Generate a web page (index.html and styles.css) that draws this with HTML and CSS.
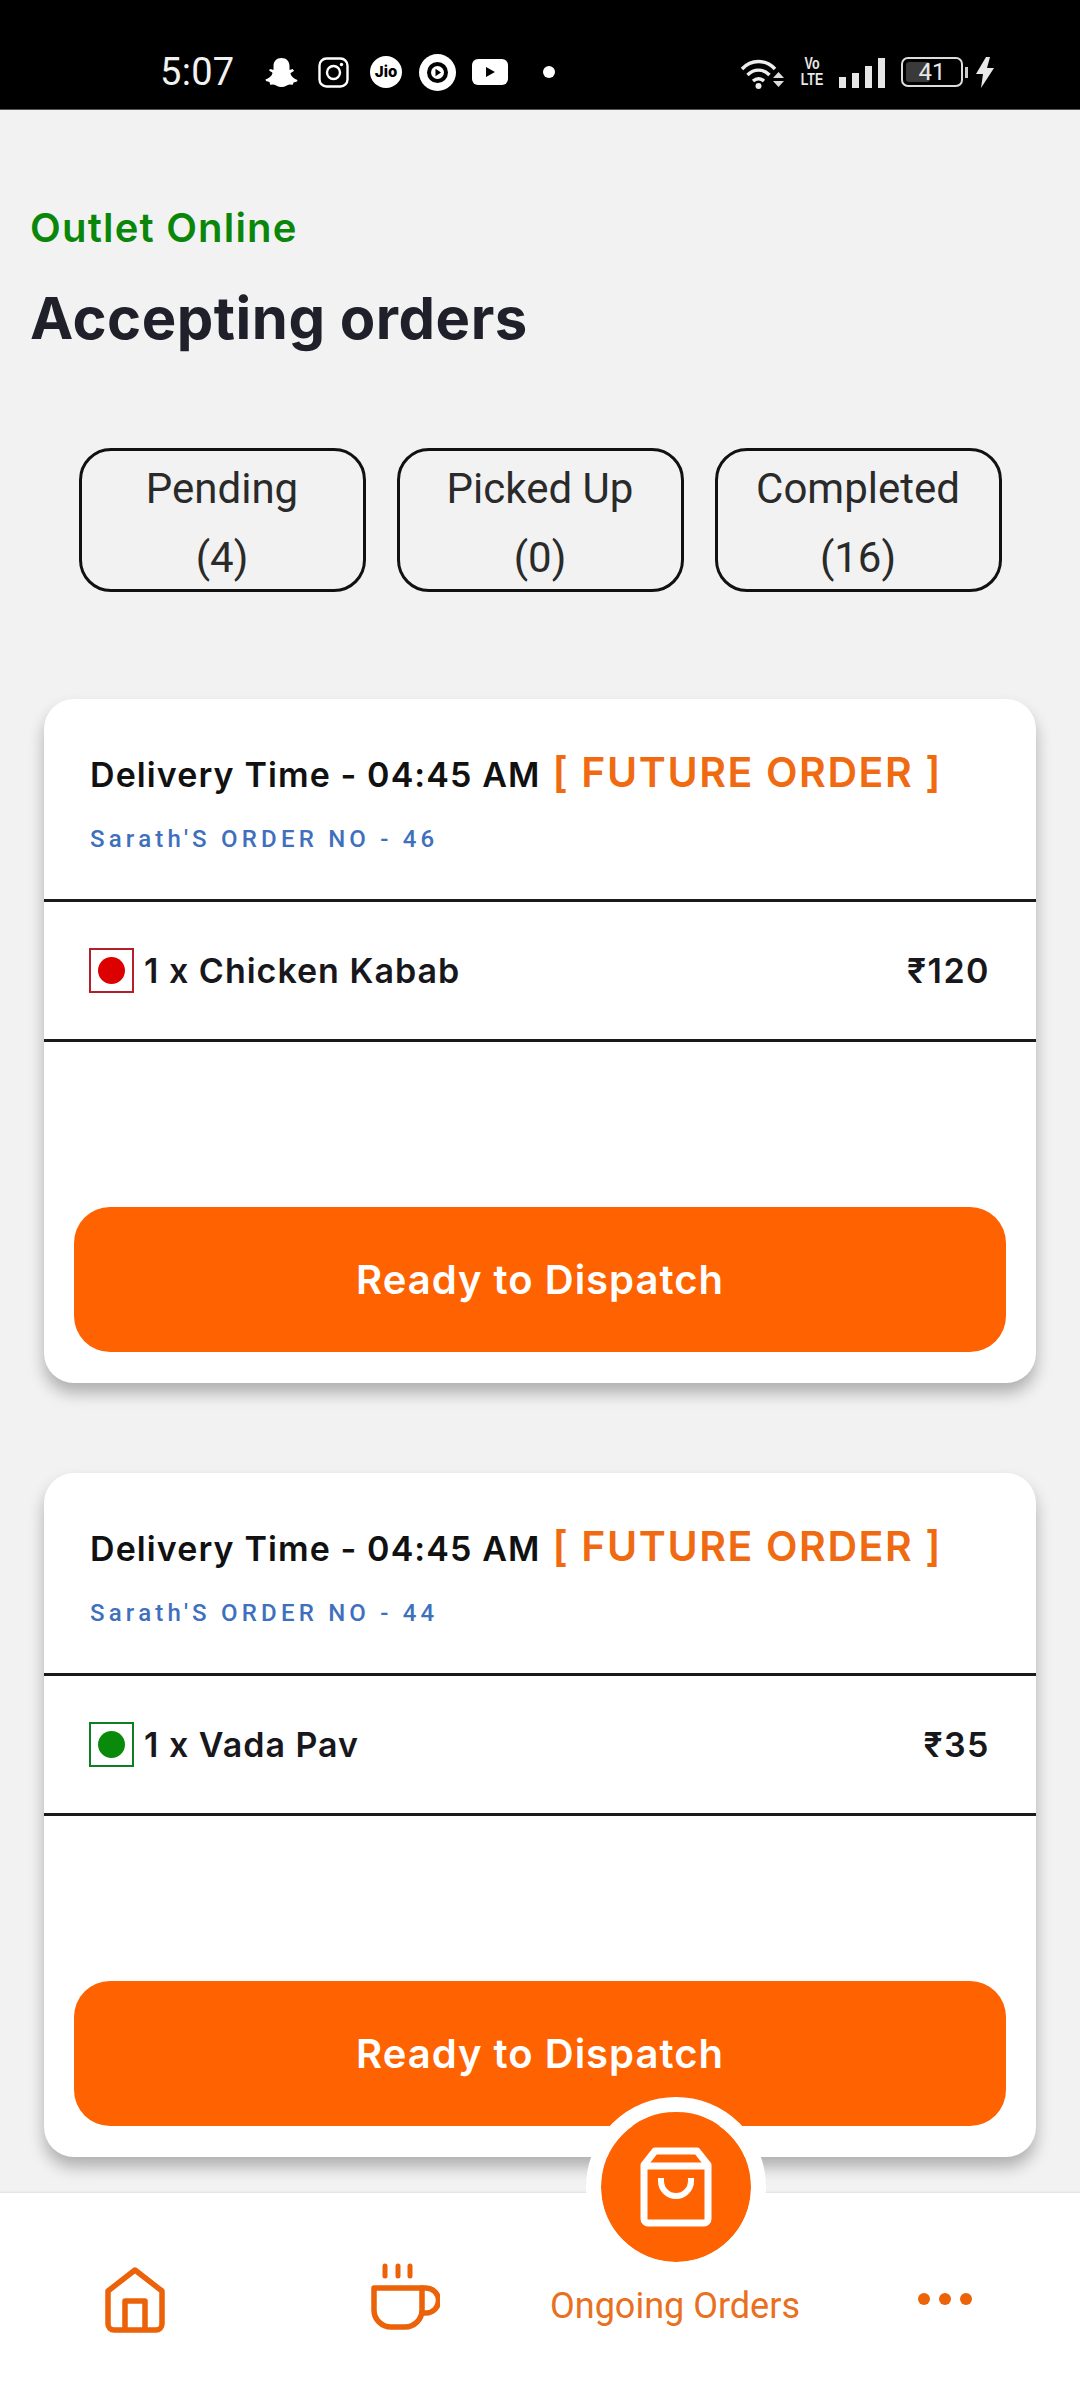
FILE: index.html
```html
<!DOCTYPE html>
<html lang="en">
<head>
<meta charset="utf-8">
<title>Accepting orders</title>
<link rel="stylesheet" href="styles.css">
</head>
<body>
<div class="app">
  <header class="status">
    <div class="status-left">
      <span class="clock">5:07</span>
      <svg class="ic-snap" viewBox="0 0 33 31"><path fill="#fff" d="M16.5 1c5 0 8 3.5 8 8v4l3-1 1.5 1.5c-.5 1.5-3.5 2-3.5 3 .5 3 4 5.5 7 6.5l-.5 1.5-3.5 1-.7 2.3-3.3-.3c-2 .3-4 2.5-8 2.5s-6-2.2-8-2.5l-3.3.3L4.5 25 1 24l-.5-1.5c3-1 6.5-3.5 7-6.5 0-1-3-1.5-3.5-3L5.5 12l3 1V9c0-4.5 3-8 8-8z"/></svg>
      <svg class="ic-insta" viewBox="0 0 31 31"><rect x="1.5" y="1.5" width="28" height="28" rx="7" fill="none" stroke="#fff" stroke-width="2.4"/><circle cx="15.5" cy="15.5" r="6.5" fill="none" stroke="#fff" stroke-width="2.4"/><circle cx="23.5" cy="7.5" r="1.7" fill="#fff"/></svg>
      <svg class="ic-jio" viewBox="0 0 32 32"><circle cx="16" cy="16" r="16" fill="#fff"/><text x="16" y="21" text-anchor="middle" class="jio-text">Jio</text></svg>
      <svg class="ic-play" viewBox="0 0 37 37"><circle cx="18.5" cy="18.5" r="18.5" fill="#fff"/><circle cx="18.5" cy="18.5" r="10.5" fill="#000"/><circle cx="18.5" cy="18.5" r="6.5" fill="#fff"/><path d="M16.5 14.8l5.5 3.7-5.500 3.700z" fill="#000"/></svg>
      <svg class="ic-yt" viewBox="0 0 36 26"><rect width="36" height="26" rx="6" fill="#fff"/><path d="M14 8l9 5-9 5z" fill="#000"/></svg>
      <span class="note-dot"></span>
    </div>
    <div class="status-right">
      <svg class="ic-wifi" viewBox="0 0 45 33"><g fill="none" stroke="#eee" stroke-width="3.400"><path d="M2 13C11 3 26 3 35 13"/><path d="M7.500 19C14 12.500 23 12.500 29.500 19"/><path d="M13 25c3.500-3 7.500-3 11 0"/></g><circle cx="18.500" cy="30" r="3" fill="#eee"/><path d="M33 22h11l-5.500-6zM33 25h11l-5.500 6z" fill="#ddd"/></svg>
      <span class="volte"><span>Vo</span><span>LTE</span></span>
      <span class="bars"><i class="b1"></i><i class="b2"></i><i class="b3"></i><i class="b4"></i></span>
      <span class="battery"><span class="battery-fill"></span><span class="battery-num">41</span></span>
      <span class="nub"></span>
      <svg class="ic-bolt" viewBox="0 0 20 31"><path d="M11 0L1 17h7L6 31l13-20h-7l3-11z" fill="#e8e8e8"/></svg>
    </div>
  </header>

  <main class="content">
    <section class="outlet">
      <p class="outlet-state">Outlet Online</p>
      <h1 class="outlet-title">Accepting orders</h1>
    </section>

    <nav class="tabs">
      <div class="tab"><span>Pending</span><span>(4)</span></div>
      <div class="tab"><span>Picked Up</span><span>(0)</span></div>
      <div class="tab"><span>Completed</span><span>(16)</span></div>
    </nav>

    <section class="orders">
      <article class="card">
        <div class="card-head">
          <p class="head-line"><span class="delivery">Delivery Time - 04:45 AM</span><span class="future">[ FUTURE ORDER ]</span></p>
          <p class="order-no">Sarath'S ORDER NO - 46</p>
        </div>
        <div class="item-row">
          <span class="food food-nonveg"><i></i></span>
          <span class="item-name">1 x Chicken Kabab</span>
          <span class="item-price">₹120</span>
        </div>
        <div class="card-spacer"></div>
        <button class="dispatch">Ready to Dispatch</button>
      </article>

      <article class="card">
        <div class="card-head">
          <p class="head-line"><span class="delivery">Delivery Time - 04:45 AM</span><span class="future">[ FUTURE ORDER ]</span></p>
          <p class="order-no">Sarath'S ORDER NO - 44</p>
        </div>
        <div class="item-row">
          <span class="food food-veg"><i></i></span>
          <span class="item-name">1 x Vada Pav</span>
          <span class="item-price">₹35</span>
        </div>
        <div class="card-spacer"></div>
        <button class="dispatch">Ready to Dispatch</button>
      </article>
    </section>
  </main>

  <footer class="bottom-nav">
    <div class="nav-item">
      <svg class="ic-home" viewBox="0 0 60 66"><g fill="none" stroke="#ec6209" stroke-width="5.500" stroke-linejoin="round"><path d="M30 3L57 24V57a6 6 0 0 1-6 6H9a6 6 0 0 1-6-6V24z"/><path d="M20 63V34H40V63"/></g></svg>
    </div>
    <div class="nav-item">
      <svg class="ic-cup" viewBox="0 0 69 67"><g fill="none" stroke="#ec6209" stroke-width="5.500" stroke-linecap="round" stroke-linejoin="round"><path d="M3 25H51V47a17 17 0 0 1-17 17H20A17 17 0 0 1 3 47z"/><path d="M51 25h4a11 11 0 0 1 0 25h-4"/></g><g stroke="#ec6209" stroke-width="5" stroke-linecap="round"><path d="M14 3v10M27 3v10M39 3v10"/></g></svg>
    </div>
    <div class="nav-item nav-item-active">
      <span class="fab">
        <svg class="ic-bag" viewBox="0 0 72 80"><g fill="none" stroke="#fff" stroke-width="7" stroke-linejoin="round"><path d="M15 4H57L68 18V72a4 4 0 0 1-4 4H8a4 4 0 0 1-4-4V18z"/><path d="M4 19H68"/></g><path d="M21 31v3a15 15 0 0 0 30 0v-3" fill="none" stroke="#fff" stroke-width="6"/></svg>
      </span>
      <span class="nav-label">Ongoing Orders</span>
    </div>
    <div class="nav-item">
      <span class="more"><i></i><i></i><i></i></span>
    </div>
  </footer>
</div>
</body>
</html>
```

FILE: styles.css
```css
* { box-sizing: border-box; }
html, body { margin: 0; padding: 0; }
body { background: #f2f2f2; font-family: Inter, "Noto Sans", sans-serif; color: #1d1d22; }
p, h1 { margin: 0; }

.app { width: 1080px; height: 2403px; display: flex; flex-direction: column; overflow: hidden; }

/* status bar */
.status { height: 110px; flex: none; background: #000; border-bottom: 1px solid #555; display: flex; justify-content: space-between; padding: 53px 85px 0 160px; }
.status-left, .status-right { display: flex; align-items: center; height: 38px; }
.clock { font-family: Roboto, sans-serif; font-size: 38px; color: #f2f2f2; width: 73px; letter-spacing: .3px; margin-right: 32px; }
.ic-snap { width: 33px; height: 31px; margin-right: 20px; }
.ic-insta { width: 31px; height: 31px; margin-right: 21px; }
.ic-jio { width: 32px; height: 32px; margin-right: 17px; }
.jio-text { font-family: Inter, sans-serif; font-weight: 800; font-size: 15px; fill: #000; }
.ic-play { width: 37px; height: 37px; margin-right: 16px; }
.ic-yt { width: 36px; height: 26px; margin-right: 35px; }
.note-dot { width: 12px; height: 12px; border-radius: 50%; background: #fff; }
.ic-wifi { width: 45px; height: 33px; margin-right: 15px; }
.volte { display: flex; flex-direction: column; align-items: center; width: 24px; margin-right: 15px; font-family: "Liberation Sans", sans-serif; font-weight: 700; font-size: 16px; line-height: 16px; color: #e8e8e8; transform: scaleX(.78); }
.bars { display: flex; align-items: flex-end; gap: 6px; height: 31px; margin-right: 16px; }
.bars i { display: block; width: 7px; background: #e6e6e6; }
.bars .b1 { height: 11px; }
.bars .b2 { height: 15px; }
.bars .b3 { height: 22px; }
.bars .b4 { height: 30px; }
.battery { position: relative; width: 62px; height: 30px; border: 2px solid #ddd; border-radius: 7px; display: flex; align-items: center; justify-content: center; }
.battery-fill { position: absolute; left: 3px; top: 3px; bottom: 3px; width: 24px; background: #3a3a3a; border-radius: 3px; }
.battery-num { position: relative; font-family: Roboto, sans-serif; font-size: 24px; color: #e8e8e8; }
.nub { width: 3px; height: 11px; margin: 0 7px 0 2px; background: #ccc; }
.ic-bolt { width: 20px; height: 31px; }

/* main */
.content { flex: 1; min-height: 0; overflow: hidden; }
.outlet { padding: 94px 30px 0; }
.outlet-state { font-size: 40px; line-height: 48px; font-weight: 600; color: #0a870a; letter-spacing: 1.200px; }
.outlet-title { margin-top: 34px; font-size: 58px; line-height: 64px; font-weight: 700; color: #1f2029; letter-spacing: .5px; }

.tabs { display: flex; justify-content: center; gap: 31px; margin-top: 98px; }
.tab { width: 287px; height: 144px; border: 3px solid #111; border-radius: 32px; display: flex; flex-direction: column; align-items: center; padding-top: 3px; font-family: Roboto, sans-serif; font-size: 42px; line-height: 69px; font-weight: 400; color: #2a2a2a; }

.orders { display: flex; flex-direction: column; gap: 90px; margin: 107px 44px 0; }
.card { height: 684px; background: #fff; border-radius: 30px; box-shadow: 0 10px 16px rgba(0,0,0,.28); display: flex; flex-direction: column; }
.card-head { height: 203px; flex: none; border-bottom: 3px solid #1a1a1a; padding: 49px 46px 0; }
.head-line { display: flex; align-items: baseline; gap: 12px; white-space: nowrap; line-height: 48px; }
.delivery { font-size: 34px; font-weight: 600; color: #111; letter-spacing: 1.100px; }
.future { font-size: 41px; font-weight: 600; color: #f06a12; letter-spacing: 1.600px; }
.order-no { margin-top: 25px; font-family: Roboto, sans-serif; font-size: 24px; line-height: 30px; font-weight: 500; color: #3f70bd; letter-spacing: 4.200px; white-space: nowrap; }

.item-row { height: 140px; flex: none; border-bottom: 3px solid #1a1a1a; display: flex; align-items: center; padding: 0 46px 0 45px; }
.food { width: 45px; height: 45px; border: 2px solid; display: flex; align-items: center; justify-content: center; margin-right: 10px; flex: none; }
.food i { display: block; width: 27px; height: 27px; border-radius: 50%; }
.food-nonveg { border-color: #b3202c; }
.food-nonveg i { background: #dc0000; }
.food-veg { border-color: #0f7d24; }
.food-veg i { background: #0a8a0a; }
.item-name { flex: 1; font-size: 34px; font-weight: 600; color: #18181c; letter-spacing: 1px; }
.item-price { font-size: 34px; font-weight: 600; color: #18181c; letter-spacing: 1.500px; }

.card-spacer { flex: 1; }
.dispatch { width: 932px; height: 145px; margin: 0 30px 31px; border: 0; border-radius: 36px; background: #ff6200; color: #fff; font-family: Inter, sans-serif; font-size: 40px; font-weight: 600; letter-spacing: 1px; }

/* bottom nav */
.bottom-nav { position: relative; height: 210px; flex: none; background: #fff; display: grid; grid-template-columns: repeat(4, 270px); padding-top: 70px; align-items: start; box-shadow: 0 -1px 2px rgba(0,0,0,.08); }
.nav-item { position: relative; display: flex; justify-content: center; }
.ic-home { width: 60px; height: 66px; margin-top: 4px; }
.ic-cup { width: 69px; height: 67px; }
.fab { position: absolute; left: 46px; top: -166px; width: 180px; height: 180px; border-radius: 50%; border: 15px solid #fff; background: #ff6200; display: flex; align-items: center; justify-content: center; background-clip: padding-box; }
.ic-bag { width: 72px; height: 80px; }
.nav-label { margin-top: 22px; font-family: Roboto, sans-serif; font-size: 36px; line-height: 42px; color: #e8701e; white-space: nowrap; }
.more { display: flex; gap: 9px; margin-top: 30px; }
.more i { display: block; width: 12px; height: 12px; border-radius: 50%; background: #ec6209; }
```
